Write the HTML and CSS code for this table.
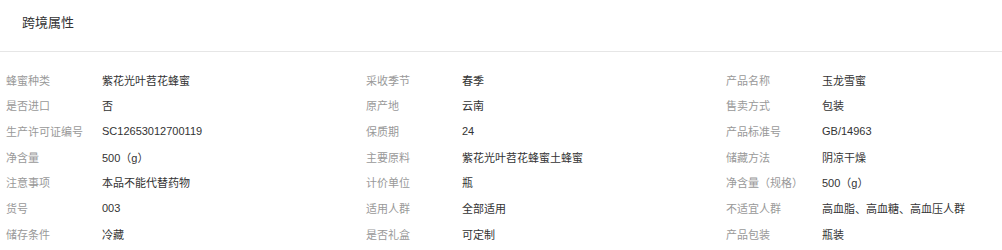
FILE: index.html
```html
<!DOCTYPE html>
<html lang="zh-CN">
<head>
<meta charset="utf-8">
<title>跨境属性</title>
<link rel="stylesheet" href="styles.css">
</head>
<body>
<section class="panel">
  <div class="panel-head">跨境属性</div>
  <div class="attrs">
    <div class="attr"><span class="label">蜂蜜种类</span><span class="value">紫花光叶苕花蜂蜜</span></div>
    <div class="attr"><span class="label">采收季节</span><span class="value">春季</span></div>
    <div class="attr"><span class="label">产品名称</span><span class="value">玉龙雪蜜</span></div>
    <div class="attr"><span class="label">是否进口</span><span class="value">否</span></div>
    <div class="attr"><span class="label">原产地</span><span class="value">云南</span></div>
    <div class="attr"><span class="label">售卖方式</span><span class="value">包装</span></div>
    <div class="attr"><span class="label">生产许可证编号</span><span class="value">SC12653012700119</span></div>
    <div class="attr"><span class="label">保质期</span><span class="value">24</span></div>
    <div class="attr"><span class="label">产品标准号</span><span class="value">GB/14963</span></div>
    <div class="attr"><span class="label">净含量</span><span class="value">500（g）</span></div>
    <div class="attr"><span class="label">主要原料</span><span class="value">紫花光叶苕花蜂蜜土蜂蜜</span></div>
    <div class="attr"><span class="label">储藏方法</span><span class="value">阴凉干燥</span></div>
    <div class="attr"><span class="label">注意事项</span><span class="value">本品不能代替药物</span></div>
    <div class="attr"><span class="label">计价单位</span><span class="value">瓶</span></div>
    <div class="attr"><span class="label">净含量（规格）</span><span class="value">500（g）</span></div>
    <div class="attr"><span class="label">货号</span><span class="value">003</span></div>
    <div class="attr"><span class="label">适用人群</span><span class="value">全部适用</span></div>
    <div class="attr"><span class="label">不适宜人群</span><span class="value">高血脂、高血糖、高血压人群</span></div>
    <div class="attr"><span class="label">储存条件</span><span class="value">冷藏</span></div>
    <div class="attr"><span class="label">是否礼盒</span><span class="value">可定制</span></div>
    <div class="attr"><span class="label">产品包装</span><span class="value">瓶装</span></div>
  </div>
</section>
</body>
</html>
```

FILE: styles.css
```css
html, body {
  margin: 0;
  padding: 0;
  background: #fff;
}
body {
  font-family: "Liberation Sans", "Noto Sans CJK SC", sans-serif;
  color: #333;
  overflow: hidden;
}
.panel {
  width: 1002px;
}
.panel-head {
  height: 51px;
  line-height: 46px;
  padding-left: 22px;
  font-size: 13px;
  color: #333;
  border-bottom: 1px solid #e6e6e6;
}
.attrs {
  display: grid;
  grid-template-columns: 360px 360px 1fr;
  grid-auto-rows: 25.67px;
  padding: 15px 0 0 6px;
}
.attr {
  display: flex;
  align-items: center;
  font-size: 11px;
  white-space: nowrap;
}
.label {
  width: 96px;
  flex: none;
  color: #999;
}
.value {
  color: #333;
}
```
